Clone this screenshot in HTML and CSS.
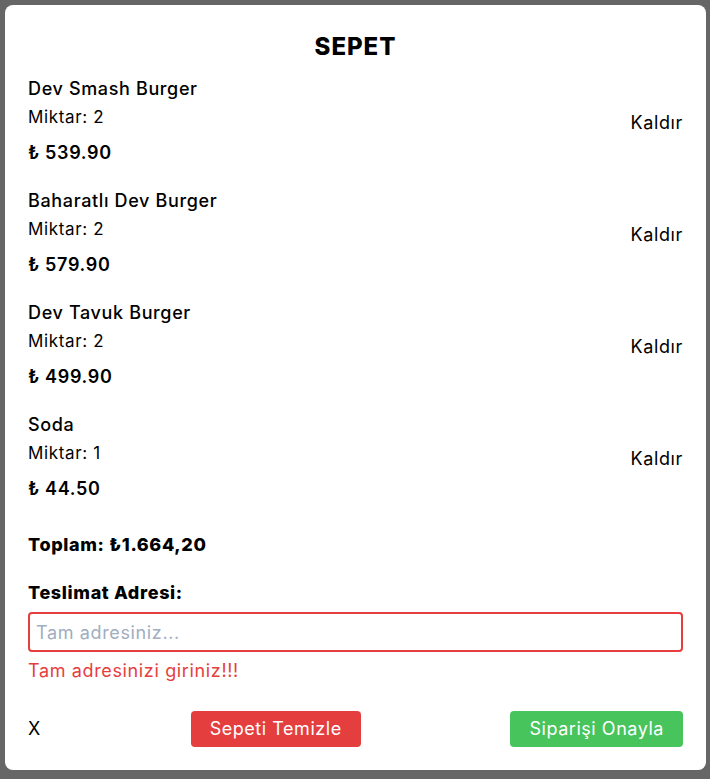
FILE: index.html
```html
<!DOCTYPE html>
<html lang="tr">
<head>
<meta charset="utf-8">
<title>Sepet</title>
<link rel="stylesheet" href="styles.css">
</head>
<body>
<div class="overlay">
  <div class="modal">
    <h2 class="title">SEPET</h2>
    <div class="items">
      <div class="item">
        <div class="info">
          <div class="name">Dev Smash Burger</div>
          <div class="qty">Miktar: 2</div>
          <div class="price">₺ 539.90</div>
        </div>
        <button class="remove">Kaldır</button>
      </div>
      <div class="item">
        <div class="info">
          <div class="name">Baharatlı Dev Burger</div>
          <div class="qty">Miktar: 2</div>
          <div class="price">₺ 579.90</div>
        </div>
        <button class="remove">Kaldır</button>
      </div>
      <div class="item">
        <div class="info">
          <div class="name">Dev Tavuk Burger</div>
          <div class="qty">Miktar: 2</div>
          <div class="price">₺ 499.90</div>
        </div>
        <button class="remove">Kaldır</button>
      </div>
      <div class="item">
        <div class="info">
          <div class="name">Soda</div>
          <div class="qty">Miktar: 1</div>
          <div class="price">₺ 44.50</div>
        </div>
        <button class="remove">Kaldır</button>
      </div>
    </div>
    <div class="total">Toplam: ₺1.664,20</div>
    <label class="label" for="addr">Teslimat Adresi:</label>
    <input id="addr" class="address" type="text" placeholder="Tam adresiniz...">
    <div class="error">Tam adresinizi giriniz!!!</div>
    <div class="actions">
      <button class="close">X</button>
      <button class="btn btn-red">Sepeti Temizle</button>
      <button class="btn btn-green">Siparişi Onayla</button>
    </div>
  </div>
</div>
</body>
</html>
```
FILE: styles.css
```css
* { box-sizing: border-box; }
html, body { margin: 0; padding: 0; }
body {
  background: #666666;
  font-family: "Inter", "Noto Sans", sans-serif;
  color: #000;
  width: 710px;
  height: 779px;
  overflow: hidden;
  letter-spacing: 0.04em;
}
.overlay {
  padding: 5px 4px 0 5px;
}
.modal {
  width: 701px;
  height: 765px;
  background: #fff;
  border-radius: 8px;
  padding: 26px 23px 22px;
  display: flex;
  flex-direction: column;
}
.title {
  margin: 0 0 12px;
  text-align: center;
  font-size: 24px;
  line-height: 32px;
  font-weight: 800;
  letter-spacing: 0.04em;
}
.items {
  display: flex;
  flex-direction: column;
  gap: 20px;
}
.item {
  display: flex;
  justify-content: space-between;
  align-items: center;
}
.info {
  display: flex;
  flex-direction: column;
}
.name {
  font-size: 18px;
  line-height: 28px;
  font-weight: 500;
}
.qty {
  font-size: 17px;
  line-height: 28px;
  font-weight: 400;
}
.price {
  margin-top: 8px;
  font-size: 18px;
  line-height: 28px;
  font-weight: 600;
}
.remove, .close {
  background: none;
  border: 0;
  padding: 0;
  font: inherit;
  letter-spacing: inherit;
  font-size: 18px;
  line-height: 28px;
  color: #000;
}
.remove { margin-top: 3px; }
.total {
  margin-top: 28px;
  font-size: 18px;
  line-height: 28px;
  font-weight: 800;
}
.label {
  margin-top: 20px;
  font-size: 18px;
  line-height: 28px;
  font-weight: 800;
}
.address {
  margin-top: 5px;
  height: 40px;
  width: 100%;
  border: 2px solid #e53e3e;
  border-radius: 4px;
  padding: 0 6px;
  font-family: inherit;
  letter-spacing: inherit;
  font-size: 18px;
  outline: none;
}
.address::placeholder { color: #a0aec0; }
.error {
  margin-top: 5px;
  color: #e53e3e;
  font-size: 18px;
  line-height: 28px;
}
.actions {
  margin-top: 26px;
  display: flex;
  justify-content: space-between;
  align-items: center;
}
.btn {
  border: 0;
  border-radius: 4px;
  height: 36px;
  padding: 0 19px;
  font-family: inherit;
  letter-spacing: 0.03em;
  font-size: 18px;
  line-height: 28px;
  color: #fff;
}
.btn-red { background: #e53e3e; }
.btn-green { background: #47c45b; }
```
